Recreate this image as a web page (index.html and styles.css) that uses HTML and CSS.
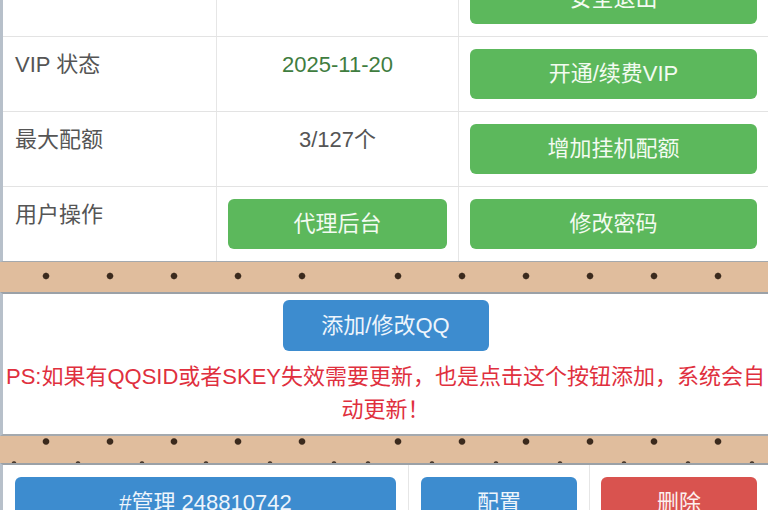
FILE: index.html
```html
<!DOCTYPE html>
<html lang="zh-CN">
<head>
<meta charset="utf-8">
<title>用户中心</title>
<link rel="stylesheet" href="styles.css">
</head>
<body>
<div class="page">
  <section class="panel info">
    <div class="row first">
      <div class="cell label">登录用户名</div>
      <div class="cell value dark">248810742</div>
      <div class="cell"><a class="btn green">安全退出</a></div>
    </div>
    <div class="row">
      <div class="cell label">VIP 状态</div>
      <div class="cell value">2025-11-20</div>
      <div class="cell"><a class="btn green">开通/续费VIP</a></div>
    </div>
    <div class="row">
      <div class="cell label">最大配额</div>
      <div class="cell value dark">3/127个</div>
      <div class="cell"><a class="btn green">增加挂机配额</a></div>
    </div>
    <div class="row">
      <div class="cell label">用户操作</div>
      <div class="cell"><a class="btn green">代理后台</a></div>
      <div class="cell"><a class="btn green">修改密码</a></div>
    </div>
  </section>

  <div class="strip strip-a"><div class="dots left"></div><div class="dots right"></div></div>

  <section class="panel qq">
    <a class="btn blue add">添加/修改QQ</a>
    <p class="notice">PS:如果有QQSID或者SKEY失效需要更新，也是点击这个按钮添加，系统会自<br>动更新！</p>
  </section>

  <div class="strip strip-b"><div class="dots left"></div><div class="dots right"></div></div>

  <section class="panel list">
    <div class="row qqrow">
      <div class="cell"><a class="btn blue">#管理 248810742</a></div>
      <div class="cell"><a class="btn blue">配置</a></div>
      <div class="cell"><a class="btn red">删除</a></div>
    </div>
  </section>
</div>
</body>
</html>
```

FILE: styles.css
```css
html, body {
  margin: 0;
  padding: 0;
  height: 510px;
  overflow: hidden;
  background: #e0bd9d;
  font-family: "Liberation Sans", "Noto Sans CJK SC", sans-serif;
  font-size: 22px;
}

.page {
  width: 768px;
}

.panel {
  background: #ffffff;
  border-left: 3px solid #b7c0ca;
  box-sizing: border-box;
  width: 768px;
}

.info {
  margin-top: -38px;
  border-bottom: 1px solid #a4a9ae;
}

.row {
  display: grid;
  grid-template-columns: 213px 242px 1fr;
  border-top: 1px solid #e3e3e3;
}

.row.first {
  border-top: 0;
}

.cell {
  box-sizing: border-box;
  padding: 12px 11px 12px 12px;
  line-height: 32px;
  min-width: 0;
}

.cell + .cell {
  border-left: 1px solid #e6e6e6;
  padding-left: 11px;
}

.label {
  color: #555555;
}

.value {
  text-align: center;
  color: #3f7d3f;
}

.value.dark {
  color: #555555;
}

.btn {
  display: block;
  height: 50px;
  line-height: 50px;
  border-radius: 6px;
  text-align: center;
  color: #f3fbf1;
  font-size: 22px;
  white-space: nowrap;
}

.green {
  background: #5cb85c;
}

.blue {
  background: #3d8ccf;
  color: #eef5fc;
}

.red {
  background: #d9534f;
  color: #fdf0ef;
}

/* dotted tan strips */
.strip {
  display: flex;
  width: 768px;
}

.strip-a {
  height: 30px;
}

.strip-b {
  height: 27px;
}

.dots {
  height: 100%;
  background-repeat: repeat-x;
  background-size: 64px 100%;
}

.dots.left {
  width: 350px;
}

.dots.right {
  flex: 1;
}

.strip-a .dots {
  background-image: radial-gradient(circle at 32px 14px, #3b2a1d 0, #3b2a1d 2.7px, rgba(59, 42, 29, 0) 3.8px);
}

.strip-a .dots.left {
  background-position: 14px 0;
}

.strip-a .dots.right {
  background-position: 16px 0;
}

.strip-b .dots {
  background-image:
    radial-gradient(circle at 32px 5.5px, #3b2a1d 0, #3b2a1d 2.7px, rgba(59, 42, 29, 0) 3.8px),
    radial-gradient(circle at 32px 27.5px, #4a3a2e 0, #4a3a2e 1.8px, rgba(74, 58, 46, 0) 2.8px);
}

.strip-b .dots.left {
  background-position: 14px 0, -18px 0;
}

.strip-b .dots.right {
  background-position: 16px 0, -14px 0;
}

/* QQ add panel */
.qq {
  border-top: 2px solid #9ba1a7;
  border-bottom: 2px solid #a4a9ae;
  padding: 6px 0 8px;
}

.add {
  width: 206px;
  height: 51px;
  line-height: 51px;
  margin: 0 auto;
}

.notice {
  margin: 9px 0 0;
  text-align: center;
  color: #e0303e;
  line-height: 33px;
  white-space: nowrap;
}

/* qq list panel */
.list {
  border-top: 2px solid #9ba1a7;
  height: 60px;
}

.qqrow {
  grid-template-columns: 405px 181px 1fr;
  border-top: 0;
}

.qqrow .cell:first-child {
  padding-right: 12px;
}

.qqrow .cell:nth-child(2) {
  padding-left: 12px;
  padding-right: 12px;
}

.qqrow .btn {
  height: 51px;
  line-height: 51px;
}
```
